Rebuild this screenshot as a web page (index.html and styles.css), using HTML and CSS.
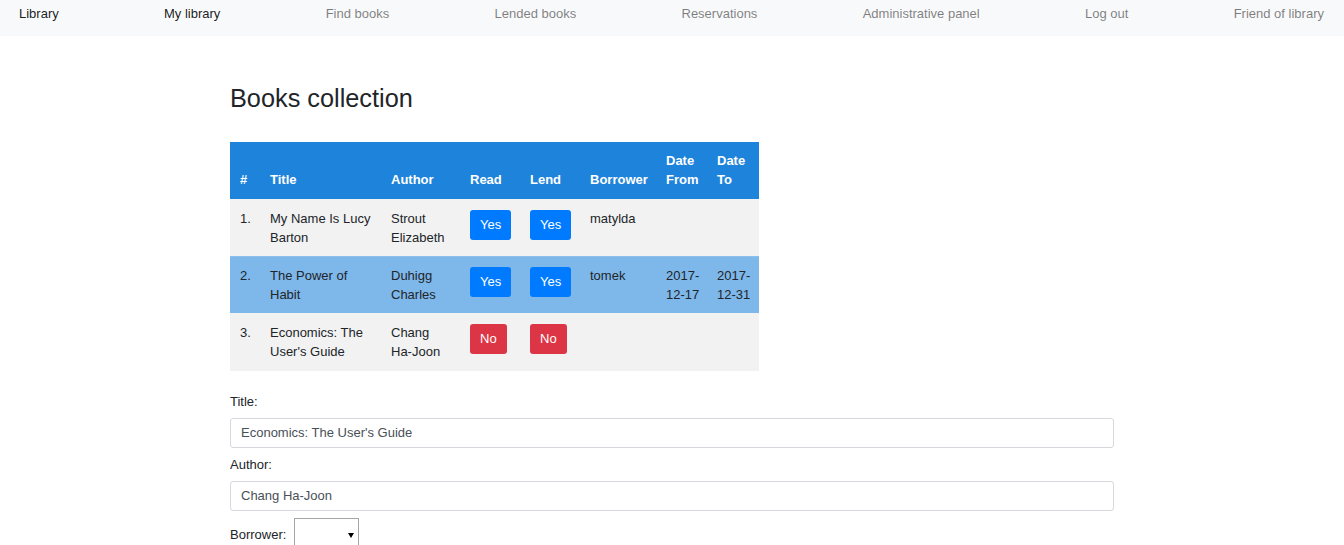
FILE: index.html
```html
<!DOCTYPE html>
<html lang="en">
<head>
<meta charset="utf-8">
<title>Books collection</title>
<link rel="stylesheet" href="styles.css">
</head>
<body>
<nav class="navbar">
  <a class="nav-link active" href="#">Library</a>
  <a class="nav-link active" href="#">My library</a>
  <a class="nav-link" href="#">Find books</a>
  <a class="nav-link" href="#">Lended books</a>
  <a class="nav-link" href="#">Reservations</a>
  <a class="nav-link" href="#">Administrative panel</a>
  <a class="nav-link" href="#">Log out</a>
  <a class="nav-link" href="#">Friend of library</a>
</nav>
<main class="container">
  <h1 class="page-title">Books collection</h1>
  <table class="books">
    <thead>
      <tr>
        <th class="c-num">#</th>
        <th class="c-title">Title</th>
        <th class="c-author">Author</th>
        <th class="c-read">Read</th>
        <th class="c-lend">Lend</th>
        <th class="c-borrower">Borrower</th>
        <th class="c-from">Date From</th>
        <th class="c-to">Date To</th>
      </tr>
    </thead>
    <tbody>
      <tr>
        <td>1.</td>
        <td>My Name Is Lucy Barton</td>
        <td>Strout Elizabeth</td>
        <td><span class="btn btn-yes">Yes</span></td>
        <td><span class="btn btn-yes">Yes</span></td>
        <td>matylda</td>
        <td class="c-from"></td>
        <td class="c-to"></td>
      </tr>
      <tr class="selected">
        <td>2.</td>
        <td>The Power of Habit</td>
        <td>Duhigg Charles</td>
        <td><span class="btn btn-yes">Yes</span></td>
        <td><span class="btn btn-yes">Yes</span></td>
        <td>tomek</td>
        <td class="c-from">2017-12-17</td>
        <td class="c-to">2017-12-31</td>
      </tr>
      <tr>
        <td>3.</td>
        <td>Economics: The User's Guide</td>
        <td>Chang Ha-Joon</td>
        <td><span class="btn btn-no">No</span></td>
        <td><span class="btn btn-no">No</span></td>
        <td></td>
        <td class="c-from"></td>
        <td class="c-to"></td>
      </tr>
    </tbody>
  </table>
  <form class="book-form">
    <label class="field-label">Title:</label>
    <input class="field-input" type="text" value="Economics: The User's Guide">
    <label class="field-label">Author:</label>
    <input class="field-input" type="text" value="Chang Ha-Joon">
    <div class="borrower-row">
      <label class="inline-label">Borrower:</label>
      <span class="select-wrap"><select class="field-select"><option></option><option>matylda</option><option>tomek</option></select></span>
    </div>
  </form>
</main>
</body>
</html>
```

FILE: styles.css
```css
* { box-sizing: border-box; }
html, body { margin: 0; padding: 0; }
body {
  font-family: "Liberation Sans", Arial, sans-serif;
  font-size: 13px;
  line-height: 19px;
  color: #212529;
  background: #fff;
}
.navbar {
  display: flex;
  align-items: center;
  justify-content: space-between;
  height: 36px;
  padding: 0 20px 9px 19px;
  background: #f8f9fa;
}
.nav-link {
  text-decoration: none;
  color: rgba(0, 0, 0, 0.5);
  white-space: nowrap;
}
.nav-link.active { color: rgba(0, 0, 0, 0.9); }

.container {
  margin-left: 230px;
  width: 884px;
}
.page-title {
  font-size: 25.3px;
  font-weight: 400;
  line-height: 30px;
  margin: 47px 0 29px;
}
.books {
  border-collapse: collapse;
  table-layout: fixed;
  width: 529px;
}
.books th, .books td {
  text-align: left;
  vertical-align: top;
  padding: 10px 10px 9px;
}
.books th {
  background: #1e83da;
  color: #fff;
  font-weight: 700;
  vertical-align: bottom;
  padding: 9px 10px 10px;
  height: 57px;
}
.books td { background: #f2f2f2; height: 57px; }
.books tbody tr + tr td { border-top: 1px solid #f2f2f2; padding-top: 9px; }
.books tr.selected td { background: #7eb7ea; border-top-color: #8cbfec; }
.c-num { width: 30px; }
.c-title { width: 121px; }
.c-author { width: 79px; }
.c-read { width: 60px; }
.c-lend { width: 60px; }
.c-borrower { width: 76px; }
.c-from { width: 51px; }
.c-to { width: 52px; }
.books .c-from, .books .c-to { padding-right: 5px; }

.btn {
  display: inline-block;
  margin-top: 1px;
  padding: 5px 10px;
  line-height: 20px;
  border-radius: 3px;
  color: #fff;
}
.btn-yes { background: #007bff; }
.btn-no { background: #dc3545; }

.book-form { margin-top: 21px; }
.field-label { display: block; margin-bottom: 7px; }
.field-input {
  display: block;
  width: 884px;
  height: 30px;
  padding: 0 10px;
  border: 1px solid #d5d8dc;
  border-radius: 3px;
  font-family: inherit;
  font-size: 13px;
  color: #495057;
  margin-bottom: 7px;
}
.borrower-row {
  display: flex;
  align-items: center;
  gap: 8px;
  margin-top: 7px;
}
.select-wrap { position: relative; display: inline-block; }
.select-wrap::after {
  content: "";
  position: absolute;
  right: 5px;
  top: 15px;
  border-left: 3px solid transparent;
  border-right: 3px solid transparent;
  border-top: 5px solid #000;
  pointer-events: none;
}
.field-select {
  -webkit-appearance: none;
  appearance: none;
  width: 65px;
  height: 34px;
  border: 1px solid #a6a6a6;
  border-radius: 0;
  background: #fff;
  font-family: inherit;
  font-size: 13px;
  display: block;
}
```
